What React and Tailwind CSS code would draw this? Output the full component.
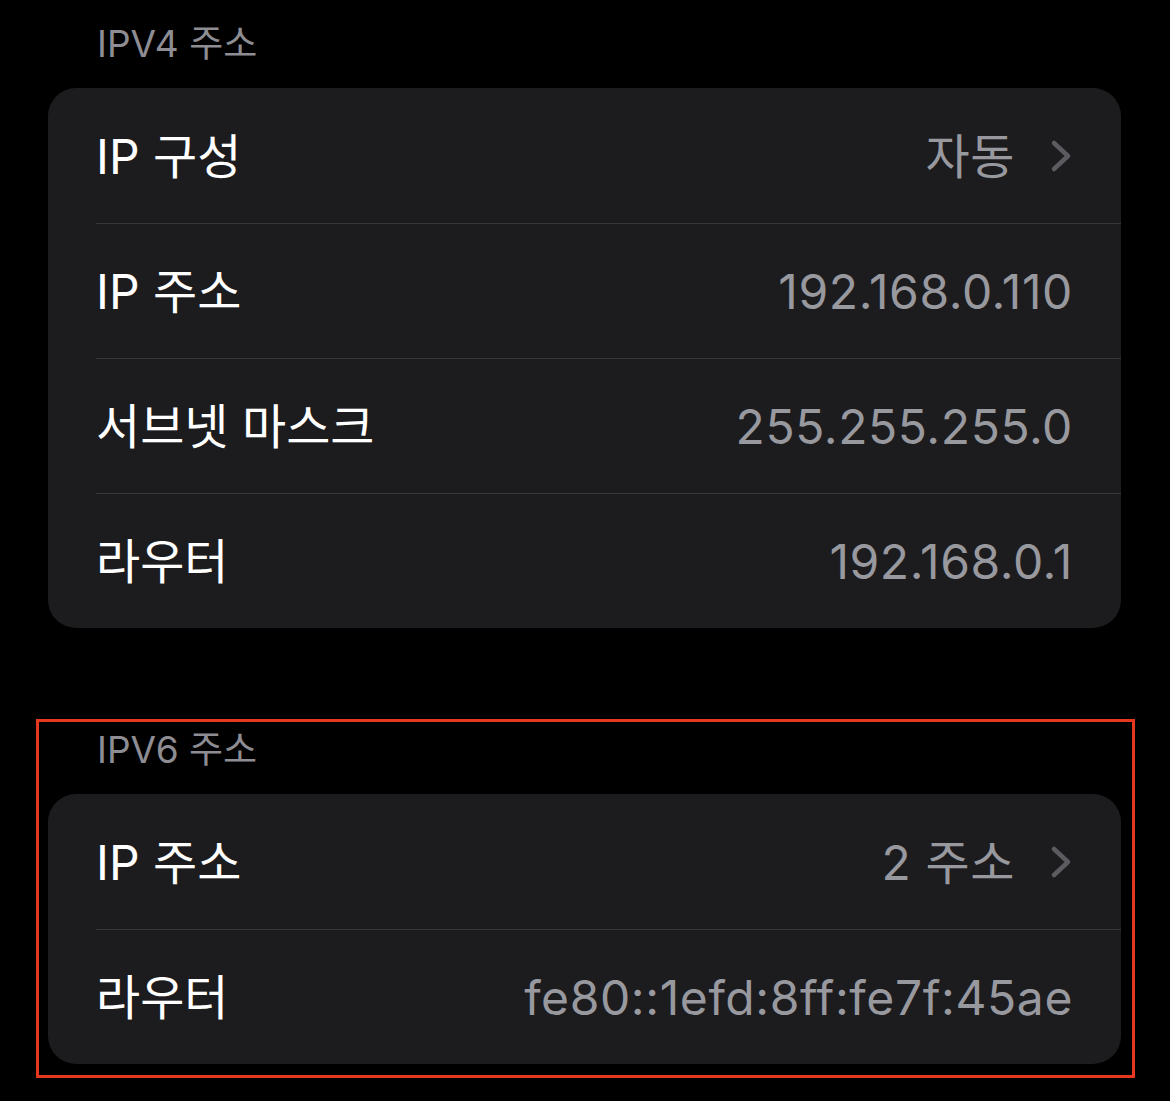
import React from "react";

const font = { fontFamily: '"Inter", "Noto Sans CJK KR", sans-serif' };

const Chevron = () => (
  <svg width="24" height="34" viewBox="0 0 24 34" fill="none" className="ml-[34px]">
    <path d="M5 4 L19 17 L5 30" stroke="#5b5b60" strokeWidth="4.5" strokeLinecap="round" strokeLinejoin="round" />
  </svg>
);

const Row = ({ label, value, chevron, first }) => (
  <div className="pl-[48px]">
    <div className={`flex h-[135px] items-center justify-between pr-[48px] ${first ? "" : "border-t border-[#38383a]"}`}>
      <span className="text-[48px] text-white pt-[2px]">{label}</span>
      <div className="flex items-center">
        <span className="text-[48px] text-[#98989f] tracking-[0.6px] pt-[2px]">{value}</span>
        {chevron && <Chevron />}
      </div>
    </div>
  </div>
);

const Section = ({ title, rows }) => (
  <div>
    <div className="pl-[49px] text-[37px] leading-[44px] text-[#8d8d93] h-[44px] mb-[22px]">{title}</div>
    <div className="bg-[#1c1c1e] rounded-[28px] overflow-hidden">
      {rows.map((r, i) => (
        <Row key={i} first={i === 0} {...r} />
      ))}
    </div>
  </div>
);

export default function App() {
  return (
    <div className="bg-black w-[1170px] h-[1101px] overflow-hidden" style={font}>
      <div className="pl-[48px] pr-[49px] pt-[22px]">
        <Section
          title="IPV4 주소"
          rows={[
            { label: "IP 구성", value: "자동", chevron: true },
            { label: "IP 주소", value: "192.168.0.110" },
            { label: "서브넷 마스크", value: "255.255.255.0" },
            { label: "라우터", value: "192.168.0.1" },
          ]}
        />
        <div className="-ml-[12px] -mr-[14px] mt-[91px] border-[3px] border-[#e5381e] pl-[9px] pr-[11px] pt-[6px] pb-[11px]">
          <Section
            title="IPV6 주소"
            rows={[
              { label: "IP 주소", value: "2 주소", chevron: true },
              { label: "라우터", value: "fe80::1efd:8ff:fe7f:45ae" },
            ]}
          />
        </div>
      </div>
    </div>
  );
}
